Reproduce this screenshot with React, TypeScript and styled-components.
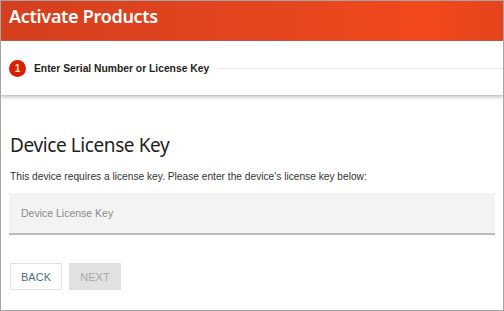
import React from "react";
import styled, { createGlobalStyle } from "styled-components";

const GlobalStyle = createGlobalStyle`
  html, body {
    margin: 0;
    padding: 0;
    background: #ffffff;
  }
  body {
    font-family: "Liberation Sans", Arial, sans-serif;
  }
`;

const Frame = styled.div`
  width: 504px;
  height: 311px;
  box-sizing: border-box;
  border: 1px solid #a4a4a4;
  display: flex;
  flex-direction: column;
  overflow: hidden;
  background: #fff;
`;

const Header = styled.header`
  height: 40px;
  flex-shrink: 0;
  display: flex;
  align-items: center;
  padding: 0 0 10px 8px;
  box-sizing: border-box;
  background: linear-gradient(90deg, #d43f1e 0%, #e5461f 55%, #f3481d 85%, #e5441c 100%);
  border-bottom: 1px solid #b8583f;
`;

const Title = styled.h1`
  margin: 0;
  color: #fff;
  font-family: "Noto Sans", sans-serif;
  font-weight: 600;
  font-size: 18px;
  line-height: 22px;
  letter-spacing: -0.3px;
`;

const StepBar = styled.div`
  height: 55px;
  flex-shrink: 0;
  display: flex;
  align-items: center;
  gap: 8px;
  padding: 0 0 0 8px;
  box-sizing: border-box;
  border-bottom: 1px solid #c9c9c9;
  box-shadow: 0 2px 3px rgba(0, 0, 0, 0.18);
`;

const StepNumber = styled.span`
  width: 17px;
  height: 17px;
  border-radius: 50%;
  background: #d81e05;
  color: #ffe6a8;
  font-size: 10px;
  font-weight: 700;
  display: flex;
  align-items: center;
  justify-content: center;
  flex-shrink: 0;
`;

const StepLabel = styled.span`
  font-size: 10.3px;
  font-weight: 700;
  color: #222;
  white-space: nowrap;
  margin-right: 1px;
`;

const StepRule = styled.span`
  flex: 1;
  height: 1px;
  background: #e6e6e6;
`;

const Body = styled.main`
  padding: 37px 8px 0 8px;
  display: flex;
  flex-direction: column;
`;

const Heading = styled.h2`
  margin: 0 0 0 1px;
  font-family: "Noto Sans", sans-serif;
  font-weight: 400;
  font-size: 19px;
  letter-spacing: -0.4px;
  color: #1e1e1e;
  line-height: 24px;
`;

const Hint = styled.p`
  margin: 13px 0 0 1px;
  font-size: 10.2px;
  color: #333;
  line-height: 14px;
`;

const KeyInput = styled.input`
  margin-top: 9px;
  height: 42px;
  box-sizing: border-box;
  width: 100%;
  border: none;
  border-bottom: 2px solid #bdbdbd;
  background: #f3f3f3;
  padding: 0 12px;
  font-family: "Liberation Sans", Arial, sans-serif;
  font-size: 10.5px;
  color: #333;
  outline: none;

  &::placeholder {
    color: #8a8a8a;
  }
`;

const Actions = styled.div`
  display: flex;
  gap: 7px;
  margin-top: 28px;
  padding-left: 1px;
`;

const Button = styled.button<{ $disabled?: boolean }>`
  width: 52px;
  height: 27px;
  box-sizing: border-box;
  font-family: "Liberation Sans", Arial, sans-serif;
  font-size: 11px;
  border: 1px solid ${(p) => (p.$disabled ? "#e0e0e0" : "#e3e3e3")};
  background: ${(p) => (p.$disabled ? "#e1e1e1" : "#fff")};
  color: ${(p) => (p.$disabled ? "#a9a9a9" : "#47708a")};
  padding: 0;
  border-radius: 0;
`;

export default function App() {
  return (
    <>
      <GlobalStyle />
      <Frame>
        <Header>
          <Title>Activate Products</Title>
        </Header>
        <StepBar>
          <StepNumber>1</StepNumber>
          <StepLabel>Enter Serial Number or License Key</StepLabel>
          <StepRule />
        </StepBar>
        <Body>
          <Heading>Device License Key</Heading>
          <Hint>This device requires a license key. Please enter the device's license key below:</Hint>
          <KeyInput placeholder="Device License Key" />
          <Actions>
            <Button>BACK</Button>
            <Button $disabled disabled>
              NEXT
            </Button>
          </Actions>
        </Body>
      </Frame>
    </>
  );
}
